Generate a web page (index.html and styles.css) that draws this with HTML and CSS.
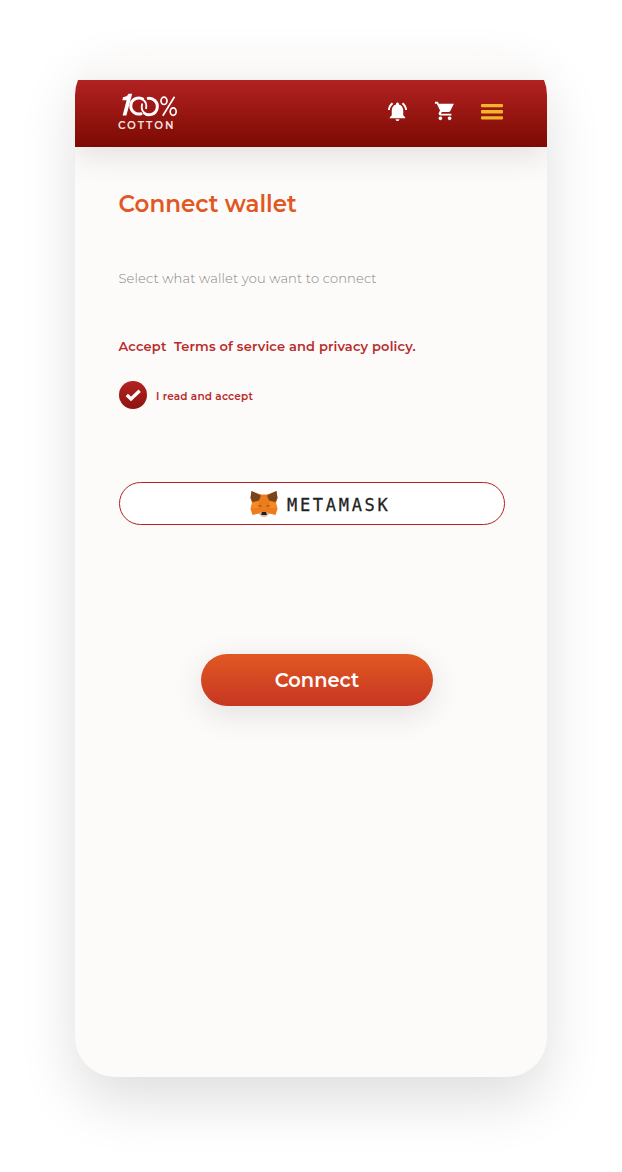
FILE: index.html
```html
<!DOCTYPE html>
<html lang="en">
<head>
<meta charset="utf-8">
<title>Connect wallet</title>
<link rel="stylesheet" href="styles.css">
</head>
<body>
<main class="phone">
  <header class="topbar">
    <div class="logo">
      <svg class="logo-mark" width="60" height="26" viewBox="0 0 60 26" fill="none" stroke="#fff">
        <path d="M5 4.200Q9 4 10.500 .8H14.200L8.400 22.500H4.600L8.600 7.200H4.400Z" fill="#fff" stroke="none"/>
        <path d="M25.500 6.500A8 8 0 1 0 24 20.300" stroke-width="3"/>
        <path d="M24.500 6.200Q29.500 9.500 28 16" stroke-width="1.800"/>
        <path d="M29 5.600A8.200 8.200 0 1 1 25.500 19.500" stroke-width="3"/>
        <path d="M26 19.800Q22.500 16 24.300 10.500" stroke-width="1.800"/>
        <ellipse cx="46" cy="7.800" rx="3" ry="3.700" stroke-width="1.700"/>
        <ellipse cx="55.200" cy="18.600" rx="3" ry="3.700" stroke-width="1.700"/>
        <path d="M56.500 3.800 44.800 22.800" stroke-width="1.700"/>
      </svg>
      <span class="logo-name">COTTON</span>
    </div>
    <nav class="actions">
      <svg width="23" height="23" viewBox="0 0 24 24" fill="#fff"><path d="M7.58 4.08 6.15 2.65C3.75 4.48 2.17 7.3 2.03 10.5h2c.15-2.65 1.51-4.97 3.55-6.42zm12.39 6.42h2c-.15-3.2-1.73-6.02-4.12-7.85l-1.42 1.43c2.02 1.45 3.39 3.77 3.54 6.42zM18 11c0-3.07-1.64-5.64-4.5-6.32V4c0-.83-.67-1.5-1.5-1.5s-1.5.67-1.5 1.5v.68C7.63 5.36 6 7.92 6 11v5l-2 2v1h16v-1l-2-2v-5zm-6 11c1.1 0 2-.9 2-2h-4c0 1.1.9 2 2 2z"/></svg>
      <svg width="22" height="22" viewBox="0 0 24 24" fill="#fff"><path d="M7 18c-1.1 0-2 .9-2 2s.9 2 2 2 2-.9 2-2-.9-2-2-2zM1 2v2h2l3.600 7.590-1.350 2.450C4.520 15.370 5.480 17 7 17h12v-2H7.420l1.130-2h7.450c.75 0 1.410-.41 1.750-1.030L21.700 4H5.210l-.94-2H1zm16 16c-1.100 0-2 .9-2 2s.9 2 2 2 2-.9 2-2-.9-2-2-2z"/></svg>
      <svg class="menu" width="22" height="18" viewBox="0 0 22 18" fill="#f3b62b"><rect y=".9" width="22" height="3.400" rx="1"/><rect y="7" width="22" height="3.400" rx="1"/><rect y="13.200" width="22" height="3.400" rx="1"/></svg>
    </nav>
  </header>
  <section class="content">
    <h1 class="title">Connect wallet</h1>
    <p class="lead">Select what wallet you want to connect</p>
    <p class="terms">Accept&nbsp; Terms of service and privacy policy.</p>
    <div class="consent">
      <span class="check"><svg width="28" height="28" viewBox="0 0 28 28" fill="none" stroke="#fff" stroke-width="3.400"><path d="M7.800 14 12 18 20.700 9.800"/></svg></span>
      <span class="consent-label">I read and accept</span>
    </div>
    <div class="wallet">
      <svg width="28" height="28" viewBox="0 0 28 28">
        <path d="M1.500 1 11 4.500H17L26.500 1 27.500 8 26 13 27.500 19 25.500 25 19.500 23.500 16 26.500H12L8.500 23.500 2.500 25 .5 19 2 13 .5 8Z" fill="#ed7c1d"/>
        <path d="M1.500 1 11 5.500 9 10.500 2.500 12 .5 8ZM26.500 1 17 5.500 19 10.500 25.500 12 27.500 8Z" fill="#79431c"/>
        <path d="M2.500 13 9 11 8 18H.500ZM25.500 13 19 11 20 18H27.500Z" fill="#f58a22"/>
        <path d="M7.500 15.500 11 15 11.500 17.200ZM20.500 15.500 17 15 16.500 17.200Z" fill="#a9501c"/>
        <path d="M9 23.500 11.500 22H16.500L19 23.500 16 26.500H12Z" fill="#cfc2b5"/>
        <path d="M11.800 22H16.200L16.800 25H11.200Z" fill="#241b18"/>
      </svg>
      <span class="wallet-name">METAMASK</span>
    </div>
    <button class="connect">Connect</button>
  </section>
</main>
</body>
</html>
```
FILE: styles.css
```css
* { box-sizing: border-box; }
body {
  margin: 0;
  height: 1172px;
  padding: 55px 75px 0;
  background: #fff;
  font-family: Montserrat, Inter, "Open Sans", sans-serif;
  overflow: hidden;
}
.phone {
  width: 472px;
  height: 1022px;
  padding-top: 25px;
  border-radius: 40px;
  background: #fcfbf9;
  box-shadow: 0 24px 56px rgba(0, 0, 0, .13);
  overflow: hidden;
}
.topbar {
  height: 67px;
  padding: 0 44px 0 43px;
  display: flex;
  justify-content: space-between;
  background: linear-gradient(#b22222, #7c0a02);
  box-shadow: 0 8px 32px rgba(0, 0, 0, .11);
}
.logo { width: 60px; padding-top: 13px; display: flex; flex-direction: column; }
.logo-name {
  font-size: 10.500px;
  line-height: 10px;
  font-weight: 600;
  letter-spacing: 1.900px;
  color: #f5e3e3;
  margin-top: 2px;
}
.actions { display: flex; align-items: flex-start; gap: 25px; padding-top: 20px; }
.menu { margin: 3px 0 0; }
.content { padding: 0 42px 0 43.500px; display: flex; flex-direction: column; }
.title { margin: 43px 0 0; font-size: 23px; line-height: 28px; font-weight: 600; color: #e25822; }
.lead { margin: 52px 0 0; font-size: 13px; line-height: 16px; font-weight: 300; letter-spacing: .160px; color: #858585; }
.terms { margin: 52px 0 0; font-size: 13px; line-height: 16px; font-weight: 600; letter-spacing: .160px; color: #b92b2b; }
.consent { margin-top: 27px; height: 28px; display: flex; align-items: center; gap: 9.500px; }
.check { width: 28px; height: 28px; border-radius: 50%; background: linear-gradient(#b22222, #8e140f); }
.check svg { display: block; }
.consent-label { padding-top: 4px; font-size: 10.500px; line-height: 14px; font-weight: 600; letter-spacing: .2px; color: #b92b2b; }
.wallet {
  margin-top: 73px;
  height: 43px;
  padding-left: 130.500px;
  border: 1px solid #b22222;
  border-radius: 22px;
  background: #fff;
  display: flex;
  align-items: center;
  gap: 9px;
}
.wallet-name {
  padding-top: 3px;
  font: 400 17px/20px "DejaVu Sans Mono", monospace;
  letter-spacing: 2.700px;
  color: #222;
  -webkit-text-stroke: .3px #222;
}
.connect {
  align-self: center;
  margin: 129px 0 0 10.500px;
  width: 232px;
  height: 52px;
  padding: 0;
  border: 0;
  border-radius: 26px;
  background: linear-gradient(#e25822, #c63622);
  box-shadow: 0 8px 32px rgba(0, 0, 0, .11);
  color: #fff;
  font: 600 19.400px/24px Montserrat, Inter, sans-serif;
}
```
